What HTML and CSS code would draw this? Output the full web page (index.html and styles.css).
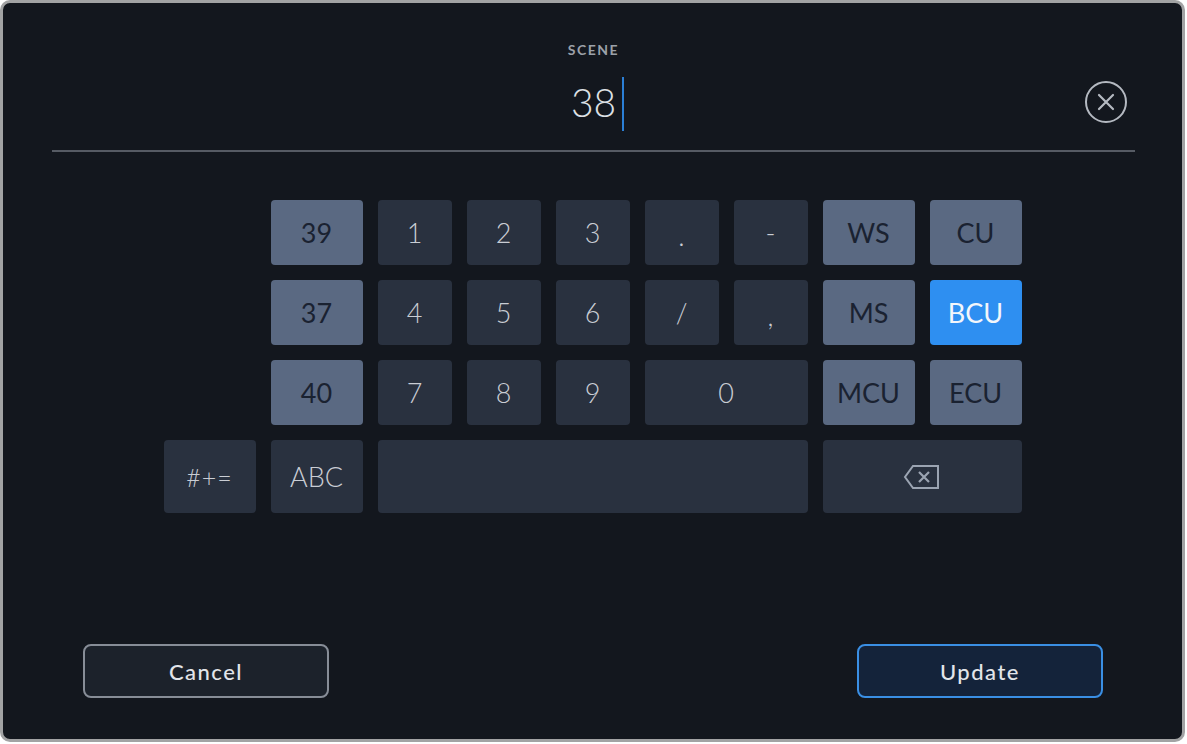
FILE: index.html
```html
<!DOCTYPE html>
<html lang="en">
<head>
    <meta charset="UTF-8">
    <meta name="viewport" content="width=device-width, initial-scale=1.0">
    <title>Scene</title>
    <link rel="stylesheet" href="styles.css">
</head>
<body>
    <div class="panel">
        <div class="header">
            <div class="field-label">SCENE</div>
            <div class="value-row">
                <div></div>
                <div class="value"><span class="value-text">38<span class="caret"></span></span></div>
                <div class="clear-btn">
                    <svg width="44" height="44" viewBox="0 0 44 44">
                        <circle cx="22" cy="22" r="20" fill="none" stroke="#b4b9c1" stroke-width="2"/>
                        <path d="M15 15 L29 29 M29 15 L15 29" stroke="#b4b9c1" stroke-width="2.2" stroke-linecap="round"/>
                    </svg>
                </div>
            </div>
        </div>

        <div class="keyboard">
            <div class="key key-light">39</div>
            <div class="key">1</div>
            <div class="key">2</div>
            <div class="key">3</div>
            <div class="key key-punct">.</div>
            <div class="key">-</div>
            <div class="key key-light">WS</div>
            <div class="key key-light">CU</div>

            <div class="key key-light">37</div>
            <div class="key">4</div>
            <div class="key">5</div>
            <div class="key">6</div>
            <div class="key">/</div>
            <div class="key key-punct">,</div>
            <div class="key key-light">MS</div>
            <div class="key key-blue">BCU</div>

            <div class="key key-light">40</div>
            <div class="key">7</div>
            <div class="key">8</div>
            <div class="key">9</div>
            <div class="key key-wide">0</div>
            <div class="key key-light">MCU</div>
            <div class="key key-light">ECU</div>

            <div class="key key-sym">#+=</div>
            <div class="key">ABC</div>
            <div class="key key-space"></div>
            <div class="key key-back">
                <svg width="38" height="28" viewBox="0 0 38 28">
                    <path d="M10 3 H35 V25 H10 L2 14 Z" fill="none" stroke="#9ba4b2" stroke-width="2" stroke-linejoin="miter"/>
                    <path d="M16 9 L26 19 M26 9 L16 19" stroke="#9ba4b2" stroke-width="2.2"/>
                </svg>
            </div>
        </div>

        <div class="actions">
            <div class="btn btn-cancel">Cancel</div>
            <div class="btn btn-update">Update</div>
        </div>
    </div>
</body>
</html>
```

FILE: styles.css
```css
body {
    font-family: Lato, "Open Sans", sans-serif;
    margin: 0;
    padding: 0;
    background-color: #fff;
}
.panel {
    width: 1185px;
    height: 742px;
    box-sizing: border-box;
    border: 3px solid #a2a3a4;
    border-radius: 10px;
    background-color: #13171e;
    display: flex;
    flex-direction: column;
}
.header {
    margin: 0 47px 0 49px;
    padding-top: 39px;
    border-bottom: 2px solid #565b64;
}
.field-label {
    text-align: center;
    font-size: 14px;
    line-height: 16px;
    font-weight: 700;
    letter-spacing: 1.5px;
    color: #9ca1a9;
}
.value-row {
    display: grid;
    grid-template-columns: 1fr auto 1fr;
    align-items: center;
    margin-top: 16px;
    height: 56px;
    margin-bottom: 20px;
}
.value {
    font-size: 39px;
    font-weight: 300;
    color: #dde0e5;
    line-height: 56px;
}
.value-text {
    position: relative;
}
.caret {
    position: absolute;
    left: 100%;
    margin-left: 6px;
    top: -2px;
    width: 2px;
    height: 54px;
    background-color: #2b7fd6;
}
.clear-btn {
    justify-self: end;
    margin-right: 7px;
    display: flex;
}
.keyboard {
    margin: 48px auto 0;
    display: grid;
    grid-template-columns: 92px 92px 74px 74px 74px 74px 74px 92px 92px;
    grid-template-rows: 65px 65px 65px 73px;
    gap: 15px;
}
.key {
    background-color: #29313f;
    border-radius: 4px;
    display: flex;
    align-items: center;
    justify-content: center;
    font-size: 27px;
    font-weight: 300;
    color: #c9cdd4;
}
.key:nth-child(1) { grid-column: 2; }
.key:nth-child(9) { grid-column: 2; }
.key:nth-child(17) { grid-column: 2; }
.key-wide { grid-column: span 2; }
.key-space { grid-column: 3 / span 5; }
.key-back { grid-column: span 2; }
.key-light {
    background-color: #5a6982;
    color: #1a2231;
    font-weight: 400;
}
.key-blue {
    background-color: #2e8ff1;
    color: #f2f6fb;
    font-weight: 400;
}
.key-sym {
    font-size: 25px;
    font-weight: 300;
    letter-spacing: 1px;
}
.key-punct {
    padding-top: 6px;
}
.actions {
    margin-top: auto;
    margin-bottom: 41px;
    padding: 0 79px 0 80px;
    display: flex;
    justify-content: space-between;
}
.btn {
    width: 246px;
    height: 54px;
    box-sizing: border-box;
    border-radius: 8px;
    display: flex;
    align-items: center;
    justify-content: center;
    font-size: 22px;
    font-weight: 500;
    letter-spacing: 1.5px;
    color: #e2e5ea;
}
.btn-cancel {
    border: 2px solid #878d97;
    background-color: #1c222b;
}
.btn-update {
    border: 2px solid #3a8fe4;
    background-color: #14233a;
}
```
